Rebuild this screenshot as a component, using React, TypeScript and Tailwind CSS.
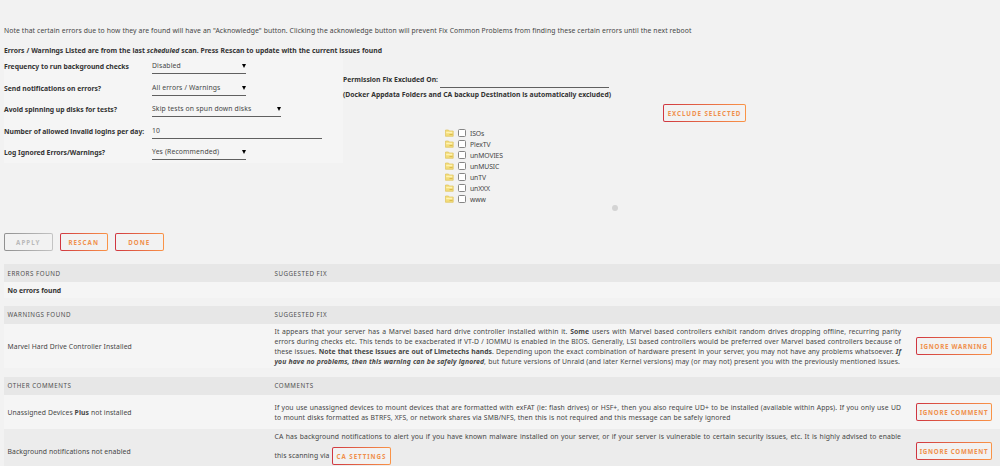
import type { ReactNode } from "react";
import clsx from "clsx";

interface ButtonProps {
  children: ReactNode;
  className?: string;
  disabled?: boolean;
}

function Button({ children, className, disabled }: ButtonProps) {
  return (
    <button
      disabled={disabled}
      className={clsx(
        "h-[18px] shrink-0 rounded-[2px] p-px",
        disabled
          ? "bg-linear-to-r from-[#909090] to-[#c4c4c4] text-[#b9b9b9]"
          : "bg-linear-to-r from-[#cf3540] to-[#fa9447] text-[#f0904c]",
        className
      )}
    >
      <span className="flex h-full items-center justify-center whitespace-nowrap rounded-[1px] bg-[#f2f2f2] pt-px text-[6.2px] font-bold">
        {children}
      </span>
    </button>
  );
}

interface FieldProps {
  label: string;
  value: string;
  width: string;
  input?: boolean;
}

function Field({ label, value, width, input }: FieldProps) {
  return (
    <div className="flex h-[21.6px] items-start">
      <div className="w-[148px] pt-[6px] font-bold leading-[10px] tracking-[-0.01px] text-[#333]">
        {label}
      </div>
      <div
        className={clsx(
          "flex h-[18px] items-start justify-between border-b border-[#606060] pt-[5px] leading-[10px]",
          width
        )}
      >
        <span className="tracking-[0.14px]">{value}</span>
        {!input && (
          <svg viewBox="0 0 4 4" className="mt-[3px] h-[4px] w-[4px] fill-black">
            <path d="M0 0h4L2 4z" />
          </svg>
        )}
      </div>
    </div>
  );
}

function Folder() {
  return (
    <svg viewBox="0 0 9 8" className="h-[8px] w-[9px]">
      <path d="M.5 1h3l.8 1h3.9v5.3H.5z" fill="#f3dc79" stroke="#dfc45e" strokeWidth=".7" />
      <path d="M1.2 2.8h6.3L7 4.3H1.2z" fill="#fff3b4" />
      <path d="M4.5 5.5h3" stroke="#cfae3d" strokeWidth=".7" />
    </svg>
  );
}

const shares = ["ISOs", "PlexTV", "unMOVIES", "unMUSIC", "unTV", "unXXX", "www"];

interface TableHeaderProps {
  left: string;
  right: string;
  className?: string;
}

function TableHeader({ left, right, className }: TableHeaderProps) {
  return (
    <div
      className={clsx(
        "flex h-[18px] items-center bg-[#e7e7e7] pl-[3.5px] text-[6.2px] tracking-[0.53px] text-[#505050]",
        className
      )}
    >
      <div className="w-[267px]">{left}</div>
      <div>{right}</div>
    </div>
  );
}

interface RowProps {
  title: ReactNode;
  children: ReactNode;
  action: string;
  className: string;
}

function TableRow({ title, children, action, className }: RowProps) {
  return (
    <div className={clsx("flex items-center pl-[3.5px]", className)}>
      <div className="w-[267px] pt-[2px]">{title}</div>
      <div className="w-[626.5px] pt-[2px] leading-[10px]">{children}</div>
      <Button className="ml-[15px] w-[76px] tracking-[0.73px]">{action}</Button>
    </div>
  );
}

function Line({ children, className = "w-full" }: { children: ReactNode; className?: string }) {
  return (
    <div className={clsx("whitespace-nowrap [text-align-last:justify]", className)}>
      {children}
    </div>
  );
}

export default function App() {
  return (
    <div className="h-[466px] w-[1000px] overflow-hidden bg-[#f2f2f2] pl-[4px] pt-[26px] font-['Noto_Sans',sans-serif] text-[6.8px] leading-[10px] tracking-[0.09px] text-[#454545]">
      <Line className="w-[687.5px]">
        Note that certain errors due to how they are found will have an "Acknowledge" button. Clicking the acknowledge button will prevent Fix Common Problems from finding these certain errors until the next reboot
      </Line>
      <Line className="mt-[10px] w-[378px] font-bold tracking-normal text-[#333]">
        Errors / Warnings Listed are from the last <i>scheduled</i> scan. Press Rescan to update with the current issues found
      </Line>

      <div className="flex h-[177px]">
        <div className="h-[107px] w-[339px] bg-[#f5f5f5]">
          <Field label="Frequency to run background checks" value="Disabled" width="w-[94px]" />
          <Field label="Send notifications on errors?" value="All errors / Warnings" width="w-[94px]" />
          <Field label="Avoid spinning up disks for tests?" value="Skip tests on spun down disks" width="w-[129px]" />
          <Field label="Number of allowed invalid logins per day:" value="10" width="w-[170px]" input />
          <Field label="Log Ignored Errors/Warnings?" value="Yes (Recommended)" width="w-[94px]" />
        </div>
        <div className="w-[405px] pt-[19px]">
          <div className="flex h-[13px] items-start font-bold tracking-normal text-[#333]">
            <Line className="w-[95px]">Permission Fix Excluded On:</Line>
            <div className="ml-[2px] h-[13px] w-[169px] border-b border-[#606060]" />
          </div>
          <Line className="mt-[2px] w-[268px] font-bold tracking-normal text-[#333]">
            (Docker Appdata Folders and CA backup Destination is automatically excluded)
          </Line>
          <div className="mt-[4px] flex justify-end pr-[2px]">
            <Button className="w-[83px] tracking-[0.95px]">EXCLUDE SELECTED</Button>
          </div>
          <div className="ml-[102px] mt-[5px]">
            {shares.map((share) => (
              <div key={share} className="flex h-[11px] items-center">
                <Folder />
                <span className="ml-[4px] h-[8px] w-[8px] rounded-[1.5px] border border-[#858585] bg-white" />
                <span className="ml-[4px] pt-[2px] tracking-[-0.1px]">{share}</span>
              </div>
            ))}
          </div>
          <div className="ml-[268.5px] mt-px h-[6px] w-[6px] rounded-full bg-[#d4d4d4]" />
        </div>
      </div>

      <div className="flex gap-[7px] tracking-[1.05px]">
        <Button className="w-[48.5px]" disabled>APPLY</Button>
        <Button className="w-[48.5px]">RESCAN</Button>
        <Button className="w-[48.5px]">DONE</Button>
      </div>

      <div className="mt-[13px]">
        <TableHeader left="ERRORS FOUND" right="SUGGESTED FIX" className="pt-px" />
        <div className="flex h-[16px] items-center bg-[#f5f5f5] pl-[3.5px] pt-[2px] font-bold tracking-[-0.03px] text-[#333]">
          No errors found
        </div>
      </div>

      <div className="mt-[8px]">
        <TableHeader left="WARNINGS FOUND" right="SUGGESTED FIX" />
        <TableRow
          className="h-[44px] bg-[#f5f5f5]"
          title="Marvel Hard Drive Controller Installed"
          action="IGNORE WARNING"
        >
          <Line>
            It appears that your server has a Marvel based hard drive controller installed within it. <b>Some</b> users with Marvel based controllers exhibit random drives dropping offline, recurring parity
          </Line>
          <Line>
            errors during checks etc. This tends to be exacberated if VT-D / IOMMU is enabled in the BIOS. Generally, LSI based controllers would be preferred over Marvel based controllers because of
          </Line>
          <Line>
            these issues. <b className="tracking-[0.03px]">Note that these issues are out of Limetechs hands</b>. Depending upon the exact combination of hardware present in your server, you may not have any problems whatsoever. <b><i>If</i></b>
          </Line>
          <Line className="w-[625.5px]">
            <b className="tracking-[0.09px]"><i>you have no problems, then this warning can be safely ignored</i></b>, but future versions of Unraid (and later Kernel versions) may (or may not) present you with the previously mentioned issues.
          </Line>
        </TableRow>
      </div>

      <div className="mt-[9px]">
        <TableHeader left="OTHER COMMENTS" right="COMMENTS" />
        <TableRow
          className="h-[34px] bg-[#f5f5f5]"
          title={<>Unassigned Devices <b>Plus</b> not installed</>}
          action="IGNORE COMMENT"
        >
          <Line>
            If you use unassigned devices to mount devices that are formatted with exFAT (ie: flash drives) or HSF+, then you also require UD+ to be installed (available within Apps). If you only use UD
          </Line>
          <Line className="w-[456px]">
            to mount disks formatted as BTRFS, XFS, or network shares via SMB/NFS, then this is not required and this message can be safely ignored
          </Line>
        </TableRow>
        <TableRow
          className="h-[44px] bg-[#ececec]"
          title="Background notifications not enabled"
          action="IGNORE COMMENT"
        >
          <Line>
            CA has background notifications to alert you if you have known malware installed on your server, or if your server is vulnerable to certain security issues, etc. It is highly advised to enable
          </Line>
          <div className="mb-[7px] mt-[5px] flex items-center">
            <Line className="w-[55px]">this scanning via</Line>
            <Button className="ml-[2.5px] w-[59px] tracking-[0.95px]">CA SETTINGS</Button>
          </div>
        </TableRow>
      </div>
    </div>
  );
}
